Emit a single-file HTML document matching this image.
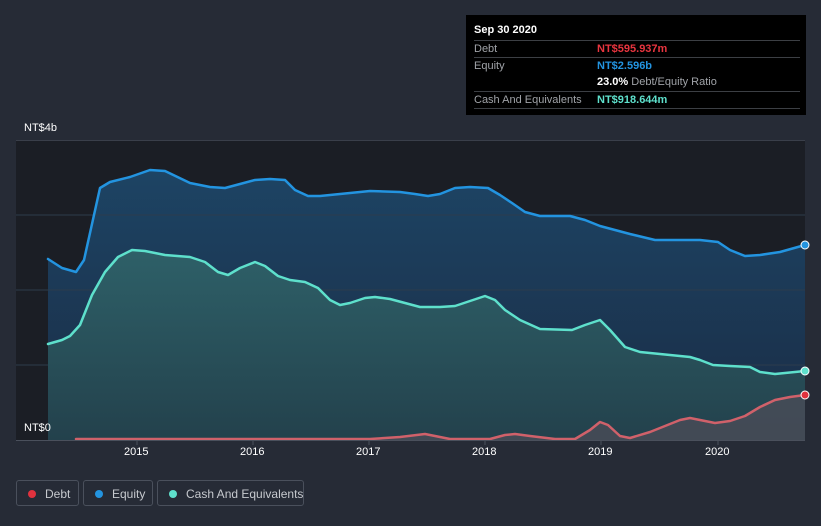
<!DOCTYPE html><html><head><style>
body{margin:0;background:#262b36;width:821px;height:526px;overflow:hidden;font-family:"Liberation Sans",sans-serif;position:relative}
.tt{position:absolute;left:466px;top:15px;width:340px;height:100px;background:#000;color:#fff;font-size:11px}
.row{position:absolute;left:8px;right:6px;border-top:1px solid #3c3f44;height:17px;line-height:17px}
.lab{color:#a0a3a8}
.v{position:absolute;left:123px;top:0;white-space:nowrap}
.lg{position:absolute;top:480px;height:26px;border:1px solid #4a505c;border-radius:3px;color:#c6c9ce;font-size:12px;line-height:26px;box-sizing:border-box;white-space:nowrap}
.lg i{position:absolute;left:11px;top:9px;width:8px;height:8px;border-radius:50%}
.ax{position:absolute;color:#fff;font-size:11px}
</style></head><body>
<svg width="821" height="526" style="position:absolute;left:0;top:0">
<defs>
<linearGradient id="ge" x1="0" y1="0" x2="0" y2="1"><stop offset="0" stop-color="#1d4464"/><stop offset="1" stop-color="#1a2c45"/></linearGradient>
<linearGradient id="gc" x1="0" y1="0" x2="0" y2="1"><stop offset="0" stop-color="#2e6068"/><stop offset="1" stop-color="#23414c"/></linearGradient>
</defs>
<rect x="16" y="140" width="789" height="300" fill="#1b1e25"/>
<polygon fill="url(#ge)" points="48,440 48,259 62,268 76,272 84,260 100,188 110,182 130,177 150,170 165,171 190,183 210,187 225,188 240,184 255,180 270,179 285,180 295,190 308,196 320,196 340,194 370,191 400,192 415,194 428,196 440,194 455,188 470,187 488,188 500,195 512,203 525,212 540,216 570,216 585,220 600,226 630,234 655,240 680,240 700,240 718,242 730,250 745,256 760,255 780,252 805,245 805,440"/>
<g stroke="#2c3c4c" stroke-width="1"><line x1="16" y1="215" x2="805" y2="215"/><line x1="16" y1="290" x2="805" y2="290"/><line x1="16" y1="365" x2="805" y2="365"/></g>
<line x1="16" y1="140.5" x2="805" y2="140.5" stroke="#3a3f4a"/>
<polygon fill="url(#gc)" points="48,440 48,344 62,340 70,336 80,325 92,295 105,272 118,257 132,250 145,251 165,255 190,257 205,262 218,272 228,275 240,268 255,262 265,266 278,276 290,280 305,282 318,288 330,300 340,305 350,303 365,298 375,297 390,299 405,303 420,307 440,307 455,306 470,301 485,296 495,300 505,310 520,320 540,329 572,330 585,325 600,320 610,330 625,347 640,352 660,354 690,357 700,360 713,365 730,366 750,367 760,372 775,374 805,371 805,440"/>
<polygon fill="#4a4c57" opacity="0.8" points="76,440 370,439 400,437 425,434 435,436 450,439 490,439 505,435 515,434 530,436 555,439 575,439 590,430 600,422 608,425 620,436 630,438 650,432 665,426 680,420 690,418 705,421 715,423 730,421 745,416 760,407 775,400 790,397 805,395 805,440"/>
<g fill="none" stroke-width="2.5" stroke-linejoin="round" stroke-linecap="round">
<polyline stroke="#2394e0" points="48,259 62,268 76,272 84,260 100,188 110,182 130,177 150,170 165,171 190,183 210,187 225,188 240,184 255,180 270,179 285,180 295,190 308,196 320,196 340,194 370,191 400,192 415,194 428,196 440,194 455,188 470,187 488,188 500,195 512,203 525,212 540,216 570,216 585,220 600,226 630,234 655,240 680,240 700,240 718,242 730,250 745,256 760,255 780,252 805,245"/>
<polyline stroke="#5ee0cc" points="48,344 62,340 70,336 80,325 92,295 105,272 118,257 132,250 145,251 165,255 190,257 205,262 218,272 228,275 240,268 255,262 265,266 278,276 290,280 305,282 318,288 330,300 340,305 350,303 365,298 375,297 390,299 405,303 420,307 440,307 455,306 470,301 485,296 495,300 505,310 520,320 540,329 572,330 585,325 600,320 610,330 625,347 640,352 660,354 690,357 700,360 713,365 730,366 750,367 760,372 775,374 805,371"/>
<polyline stroke="#d0616a" points="76,439 370,439 400,437 425,434 435,436 450,439 490,439 505,435 515,434 530,436 555,439 575,439 590,430 600,422 608,425 620,436 630,438 650,432 665,426 680,420 690,418 705,421 715,423 730,421 745,416 760,407 775,400 790,397 805,395"/>
</g>
<line x1="16" y1="440.5" x2="805" y2="440.5" stroke="#4a505c"/>
<g stroke="#4a505c"><line x1="137" y1="441" x2="137" y2="445"/><line x1="253" y1="441" x2="253" y2="445"/><line x1="369" y1="441" x2="369" y2="445"/><line x1="485" y1="441" x2="485" y2="445"/><line x1="601" y1="441" x2="601" y2="445"/><line x1="718" y1="441" x2="718" y2="445"/></g>
<circle cx="805" cy="245" r="4" fill="#2394e0" stroke="#fff"/>
<circle cx="805" cy="371" r="4" fill="#5ee0cc" stroke="#fff"/>
<circle cx="805" cy="395" r="4" fill="#e0323e" stroke="#fff"/>
</svg>
<div class="ax" style="left:24px;top:122px">NT$4b</div>
<div class="ax" style="left:24px;top:422px">NT$0</div>
<div class="ax" style="left:124px;top:446px">2015</div>
<div class="ax" style="left:240px;top:446px">2016</div>
<div class="ax" style="left:356px;top:446px">2017</div>
<div class="ax" style="left:472px;top:446px">2018</div>
<div class="ax" style="left:588px;top:446px">2019</div>
<div class="ax" style="left:705px;top:446px">2020</div>
<div class="tt">
<div style="position:absolute;left:8px;top:9px;font-weight:bold">Sep 30 2020</div>
<div class="row" style="top:25px"><span class="lab">Debt</span><span class="v" style="color:#e9353f;font-weight:bold">NT$595.937m</span></div>
<div class="row" style="top:42px"><span class="lab">Equity</span><span class="v" style="color:#2394e0;font-weight:bold">NT$2.596b</span></div>
<div class="row" style="top:59px;border-top:none"><span class="v"><b>23.0%</b> <span class="lab">Debt/Equity Ratio</span></span></div>
<div class="row" style="top:76px"><span class="lab">Cash And Equivalents</span><span class="v" style="color:#5ee0cc;font-weight:bold">NT$918.644m</span></div>
<div class="row" style="top:93px;height:0"></div>
</div>
<div class="lg" style="left:16px;width:63px"><i style="background:#e0323e"></i><span style="position:absolute;left:28px">Debt</span></div>
<div class="lg" style="left:83px;width:70px"><i style="background:#2394e0"></i><span style="position:absolute;left:28px">Equity</span></div>
<div class="lg" style="left:157px;width:147px"><i style="background:#5ee0cc"></i><span style="position:absolute;left:28px">Cash And Equivalents</span></div>
</body></html>
